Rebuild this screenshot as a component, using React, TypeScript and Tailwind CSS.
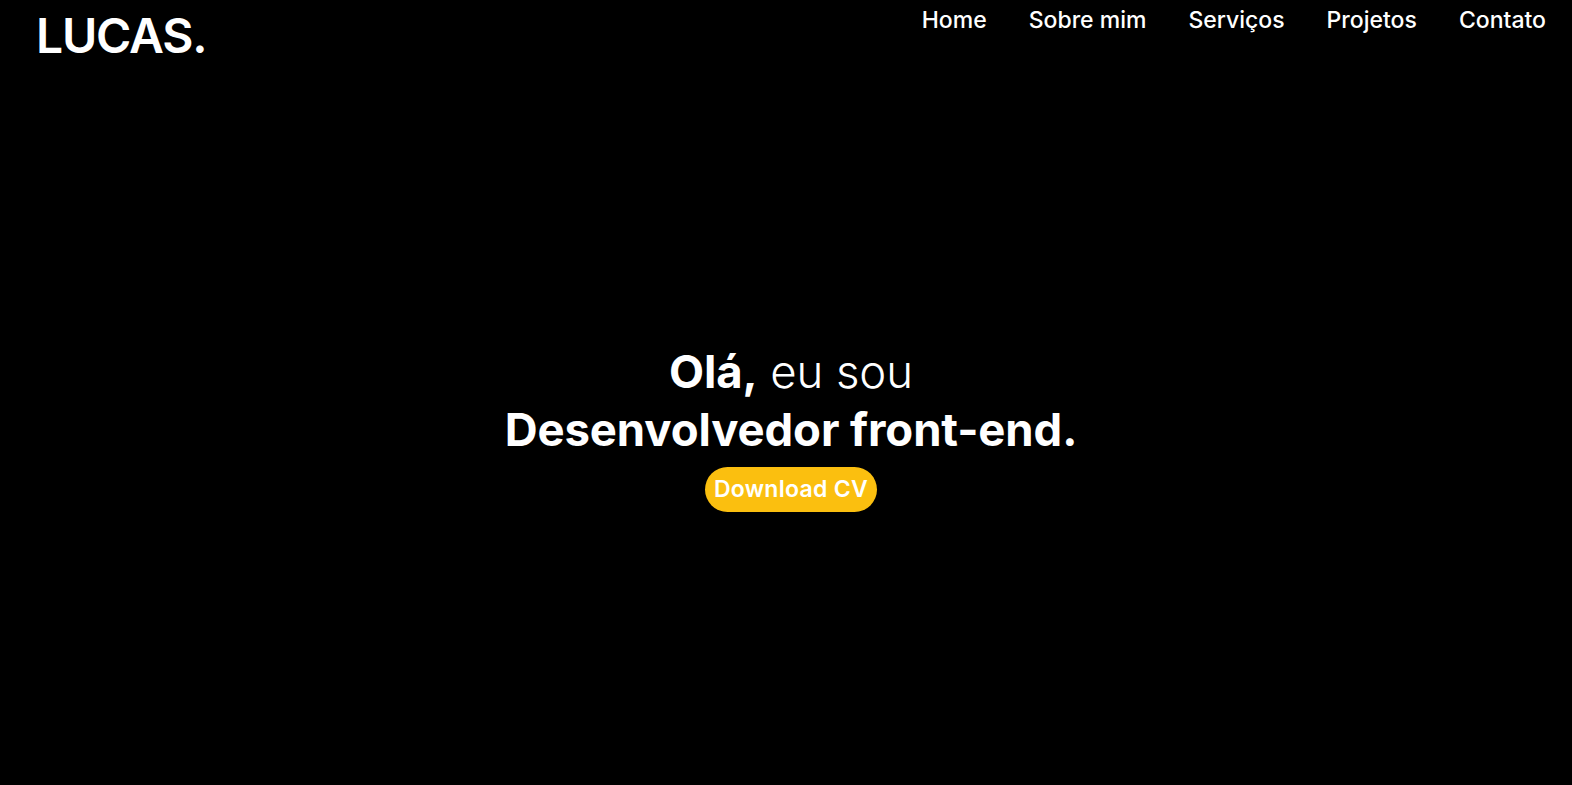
export default function App() {
  const links = ['Home', 'Sobre mim', 'Serviços', 'Projetos', 'Contato'];
  return (
    <div className="min-h-screen bg-black text-white font-['Inter',sans-serif] flex flex-col">
      {/* Header */}
      <header className="flex items-start justify-between pl-[36px] pr-[26px]">
        <a href="#" className="text-[48px] font-semibold leading-none tracking-[-1.2px] pt-[12px]">
          LUCAS.
        </a>
        <nav className="flex gap-[42px] pt-[6px]">
          {links.map((l) => (
            <a key={l} href="#" className="text-[23px] font-medium leading-[28px] tracking-[0px]">
              {l}
            </a>
          ))}
        </nav>
      </header>

      {/* Hero */}
      <main className="flex-1 flex flex-col items-center justify-center text-center pl-[10px] pt-[280px] pb-[270px]">
        <h1 className="text-[45.5px] leading-[58px] tracking-[-0.1px]">
          <span className="font-bold">Olá,</span> <span className="font-light">eu sou</span>
          <br />
          <span className="font-bold">Desenvolvedor front-end.</span>
        </h1>
        <button className="mt-[8px] h-[45px] px-[9px] rounded-full bg-[#fbbf0f] text-white text-[23px] font-semibold tracking-[0.3px]">
          Download CV
        </button>
      </main>
    </div>
  );
}
